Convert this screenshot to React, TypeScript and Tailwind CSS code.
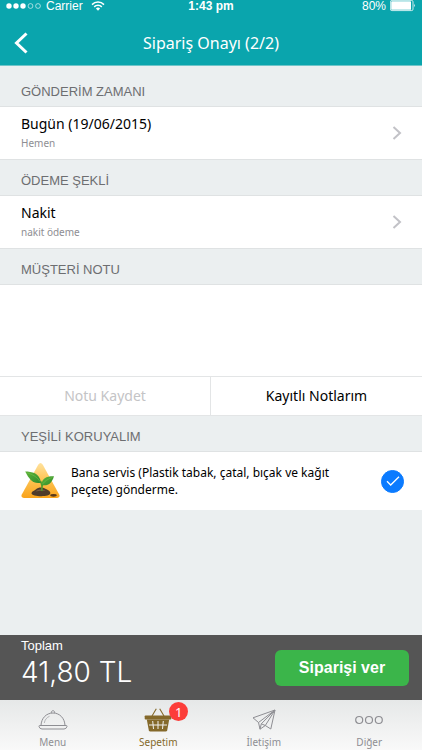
import { useState } from "react";
import type { ReactNode } from "react";

const SectionTitle = ({ children }: { children: ReactNode }) => (
  <h2 className="flex h-9 items-center border-b border-[#dfe2e3] px-[21px] pt-1.5 text-[13px] text-[#6d6e71]">
    {children}
  </h2>
);

const Chevron = () => (
  <svg viewBox="0 0 10 16" className="h-4 w-2.5" fill="none">
    <path d="M1.5 2 8 8l-6.5 6" stroke="#c2c2c7" strokeWidth="2" />
  </svg>
);

const OptionRow = ({ title, detail }: { title: string; detail: string }) => (
  <button
    type="button"
    className="flex h-[53px] w-full items-center justify-between border-b border-[#dfe2e3] bg-white pr-5 pl-[21px] text-left font-['Noto_Sans',sans-serif]"
  >
    <span className="block">
      <span className="block text-sm leading-5 text-black">{title}</span>
      <span className="block text-[10px] leading-[18px] text-[#8e8e93]">
        {detail}
      </span>
    </span>
    <Chevron />
  </button>
);

const StatusBar = () => (
  <div className="grid h-3 grid-cols-3 items-center px-1.5 font-['Liberation_Sans',Arial,sans-serif] text-xs leading-3 text-white">
    <div className="flex items-center gap-1">
      <svg viewBox="0 0 36 6" className="h-1.5 w-9" fill="#fff">
        <circle cx="3" cy="3" r="2.7" />
        <circle cx="10" cy="3" r="2.7" />
        <circle cx="17" cy="3" r="2.7" />
        <circle cx="24.5" cy="3" r="2.4" fill="none" stroke="#fff" strokeWidth=".6" />
        <circle cx="32" cy="3" r="2.4" fill="none" stroke="#fff" strokeWidth=".6" />
      </svg>
      <span>Carrier</span>
      <svg viewBox="0 0 14 10" className="ml-1 h-2.5 w-3.5" fill="none" stroke="#fff" strokeWidth="1.5">
        <path d="M1 3.6a8.5 8.5 0 0 1 12 0M3.2 5.9a5.4 5.4 0 0 1 7.6 0" />
        <path d="M7 9.8 4.9 7.6a3 3 0 0 1 4.2 0z" fill="#fff" stroke="none" />
      </svg>
    </div>
    <div className="text-center font-bold">1:43 pm</div>
    <div className="flex items-center justify-end gap-1">
      <span>80%</span>
      <svg viewBox="0 0 26 12" className="h-3 w-[26px]">
        <rect x=".4" y=".4" width="22.6" height="10.2" rx="1.4" fill="none" stroke="#fff" strokeWidth=".8" />
        <rect x="1.2" y="1.2" width="19.8" height="8.6" rx=".6" fill="#fff" />
        <path d="M24 3.7q1.5 1.8 0 3.6z" fill="#fff" />
      </svg>
    </div>
  </div>
);

const PlantSign = () => (
  <svg viewBox="0 0 40 36" className="h-9 w-10 shrink-0">
    <defs>
      <linearGradient id="sign" x1="0" y1="0" x2="0" y2="1">
        <stop offset="0" stopColor="#ffe29e" />
        <stop offset=".5" stopColor="#fdc251" />
        <stop offset="1" stopColor="#f9a31c" />
      </linearGradient>
      <linearGradient id="leaf" x1="0" y1="0" x2="1" y2="1">
        <stop offset="0" stopColor="#5fb53a" />
        <stop offset="1" stopColor="#2f8a2b" />
      </linearGradient>
    </defs>
    <path
      d="M17.2 1.8q2.3-3.4 4.6 0l16.4 29.6q1.4 3.3-2 3.6H2.8q-3.4-.3-2-3.6z"
      fill="url(#sign)"
    />
    <path
      d="M10.5 30c.5-2 3-2.3 4.5-3.8 2-1.9 6.5-2.2 9-.7 2 1.2 5 1.8 5.3 4.3.2 2.6-4.5 3.4-9 3.4s-10.2-.8-9.8-3.2z"
      fill="#4f3b2a"
    />
    <path d="M14.5 28.5c2.5-2.2 7-2.6 10-.6-3.5-.4-6.5-.3-10 .6z" fill="#7b5f48" />
    <ellipse cx="32.5" cy="32.3" rx="3.3" ry="1.4" fill="#5a3a1c" />
    <path
      d="M20.6 28c.8-3.5.6-6.5-1-10M20.9 25c.2-4 1.6-5.5 3.7-6.5"
      fill="none"
      stroke="#4f9a2d"
      strokeWidth="1.5"
    />
    <path
      d="M4.2 8.5C10.500 8.700 18.500 9.500 20 19.700 12.300 21.300 8.500 17 4.200 8.500z"
      fill="url(#leaf)"
    />
    <path
      d="M33 13.2c-7.300-.2-12.500 2-12.500 8.800 6.600 1.600 10.500-2.200 12.500-8.800z"
      fill="url(#leaf)"
    />
    <path
      d="M6.5 10c5.3 1.500 10 4.200 12.600 8.600M31.300 14.500c-4.200 1.400-7.300 3.300-9.600 6.400"
      fill="none"
      stroke="#7cc64e"
      strokeWidth=".5"
    />
  </svg>
);

const MenuIcon = () => (
  <svg viewBox="0 0 30 22" className="h-[22px] w-[30px]" fill="none" stroke="#8e8e93">
    <path d="M13.4 4a1.7 1.7 0 1 1 3.2 0" />
    <path d="M3 16.5C3.3 9.3 8.2 4 15 4s11.7 5.300 12 12.500" />
    <path d="M1.8 16.5h26.400q1 0 .8 1-.7 2.500-3 2.500H4q-2.300 0-3-2.500-.2-1 .8-1z" />
    <path d="M6.3 14c.5-3.200 2.400-5.600 5.200-6.700" strokeWidth=".6" />
  </svg>
);

const BasketIcon = () => (
  <svg viewBox="0 0 28 24" className="h-6 w-7" fill="none" stroke="#84692a">
    <path d="M8 8 12.300.8M20 8 15.700.8" strokeWidth="1.1" />
    <path
      d="M1.500 7.500h25q.8 0 .8.800v2.400q0 .8-.8.800h-25q-.8 0-.8-.8V8.300q0-.8.800-.8z"
      fill="#84692a"
      stroke="none"
    />
    <path
      d="M2.800 11.500h22.400l-2 10.700q-.3 1.300-1.600 1.300H6.400q-1.300 0-1.600-1.300z"
      fill="#84692a"
      stroke="none"
    />
    <path
      d="M5 17h18M8.700 13l.8 8M14 13v8M19.300 13l-.8 8"
      stroke="#f1f1ee"
      strokeWidth="1"
    />
  </svg>
);

const PlaneIcon = () => (
  <svg
    viewBox="0 0 24 22"
    className="h-[22px] w-6"
    fill="none"
    stroke="#8e8e93"
    strokeLinejoin="round"
  >
    <path d="M23 1 1 8.8l5.500 4.700L23 1l-4.200 19-5.500-3.500zM6.500 13.500 8 20.200l1.300-5.400L23 1M8 20.200l5.300-3.700-4-1.700" />
  </svg>
);

const MoreIcon = () => (
  <svg viewBox="0 0 28 22" className="h-[22px] w-7" fill="none" stroke="#8e8e93" strokeWidth="1.2">
    <circle cx="4.2" cy="11" r="3.5" />
    <circle cx="14" cy="11" r="3.5" />
    <circle cx="23.8" cy="11" r="3.5" />
  </svg>
);

const tabs = [
  { label: "Menu", icon: <MenuIcon /> },
  { label: "Sepetim", icon: <BasketIcon />, active: true, badge: 1 },
  { label: "İletişim", icon: <PlaneIcon /> },
  { label: "Diğer", icon: <MoreIcon /> },
];

const App = () => {
  const [note, setNote] = useState("");
  const [noCutlery, setNoCutlery] = useState(true);

  return (
    <div className="flex min-h-screen flex-col bg-[#ebeff0] font-['Liberation_Sans',Arial,sans-serif]">
      <header className="border-b border-[#6fc5c9] bg-[#0aa5ad] text-white">
        <StatusBar />
        <div className="grid h-[53px] grid-cols-[1fr_auto_1fr] items-center px-3.5">
          <button type="button" aria-label="Geri" className="w-6 pt-2">
            <svg viewBox="0 0 14 22" className="h-[22px] w-3.5" fill="none">
              <path d="M12.5 1.5 2.5 11l10 9.5" stroke="#fff" strokeWidth="3" />
            </svg>
          </button>
          <h1 className="pt-2 font-['Noto_Sans',sans-serif] text-base">
            Sipariş Onayı (2/2)
          </h1>
        </div>
      </header>

      <main className="flex-1 pt-[5px]">
        <SectionTitle>GÖNDERİM ZAMANI</SectionTitle>
        <OptionRow title="Bugün (19/06/2015)" detail="Hemen" />
        <SectionTitle>ÖDEME ŞEKLİ</SectionTitle>
        <OptionRow title="Nakit" detail="nakit ödeme" />

        <SectionTitle>
          <label htmlFor="note">MÜŞTERİ NOTU</label>
        </SectionTitle>
        <textarea
          id="note"
          value={note}
          onChange={(e) => setNote(e.target.value)}
          className="block h-[91px] w-full resize-none bg-white px-[21px] py-2 text-sm outline-none"
        />
        <div className="grid h-10 grid-cols-2 divide-x divide-[#e3e5e6] border-y border-[#e3e5e6] bg-white font-['Noto_Sans',sans-serif] text-sm">
          <button type="button" disabled={!note} className="text-black disabled:text-[#c4c4c6]">
            Notu Kaydet
          </button>
          <button type="button" className="text-black">
            Kayıtlı Notlarım
          </button>
        </div>

        <SectionTitle>YEŞİLİ KORUYALIM</SectionTitle>
        <label className="flex h-[58px] items-center bg-white pr-[18px] pl-[21px]">
          <PlantSign />
          <span className="ml-2.5 flex-1 font-['Noto_Sans',sans-serif] text-xs leading-[17px] text-black">
            Bana servis (Plastik tabak, çatal, bıçak ve kağıt
            <br />
            peçete) gönderme.
          </span>
          <span className="grid place-items-center">
            <input
              type="checkbox"
              checked={noCutlery}
              onChange={(e) => setNoCutlery(e.target.checked)}
              className="peer col-start-1 row-start-1 size-[23px] appearance-none rounded-full border border-[#c4c4c6] checked:border-[#0b7bff] checked:bg-[#0b7bff]"
            />
            <svg
              viewBox="0 0 14 10"
              className="pointer-events-none invisible col-start-1 row-start-1 h-2.5 w-3.5 peer-checked:visible"
              fill="none"
            >
              <path d="M1 5.2 4.7 9 13 .8" stroke="#fff" strokeWidth="1.3" />
            </svg>
          </span>
        </label>
      </main>

      <section className="flex h-[65px] items-center justify-between bg-[#555] pr-[13px] pl-[21px] text-white">
        <div className="pb-2">
          <p className="text-[13px] leading-4">Toplam</p>
          <p className="font-['Inter',sans-serif] text-[28px] leading-9 font-light">
            41,80 TL
          </p>
        </div>
        <button
          type="button"
          className="h-9 w-[134px] rounded-md bg-[#3bb54a] font-bold text-white"
        >
          Siparişi ver
        </button>
      </section>

      <nav className="grid h-[50px] grid-cols-4 bg-linear-to-b from-[#e6e8e8] to-[#f9f9f9] font-['Noto_Sans',sans-serif]">
        {tabs.map((tab) => (
          <a
            key={tab.label}
            href="#"
            className={`flex flex-col items-center pt-2 text-[10px] leading-3 ${
              tab.active ? "text-[#84692a]" : "text-[#8e8e93]"
            }`}
          >
            <span className="relative flex h-6 items-center">
              {tab.icon}
              {tab.badge && (
                <span className="absolute -top-1.5 -right-4 flex size-[19px] items-center justify-center rounded-full bg-[#fc3d39] text-[13px] text-white">
                  {tab.badge}
                </span>
              )}
            </span>
            <span className="mt-1">{tab.label}</span>
          </a>
        ))}
      </nav>
    </div>
  );
};

export default App;
